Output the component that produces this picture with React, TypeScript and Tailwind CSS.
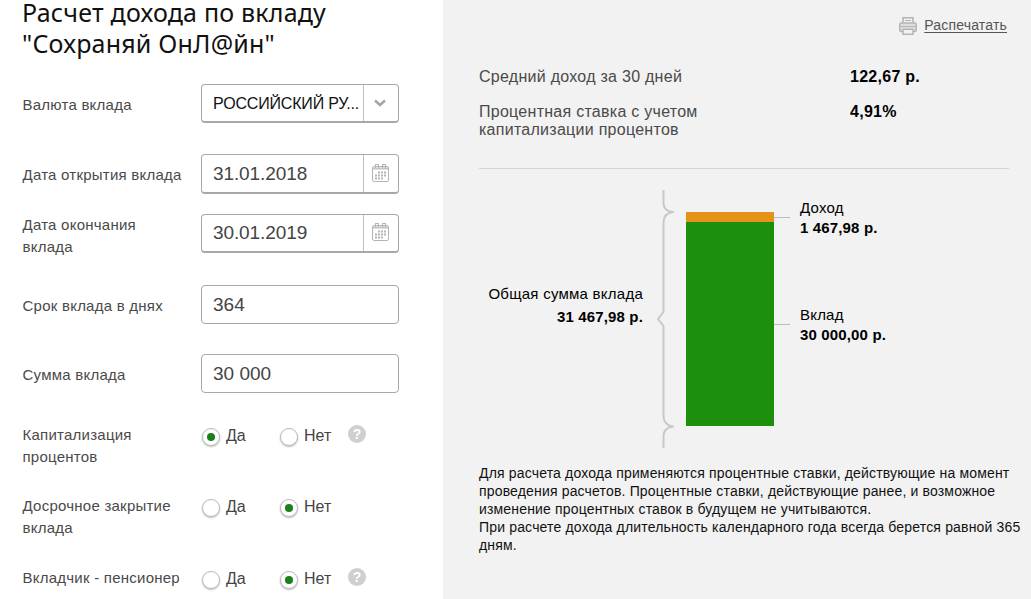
import { ReactNode, useState } from "react";
import clsx from "clsx";

const Brace = () => (
  <svg
    className="mt-[21px] h-[258px] w-[20px] shrink-0"
    viewBox="0 0 20 258"
    fill="none"
    stroke="#c8c8c8"
    strokeWidth="2"
    strokeLinejoin="round"
  >
    <path d="M8.5 0V13Q8.5 21 18 22Q8.5 23 8.5 33V122L3 129L8.5 136V226Q8.5 235 18 236.500Q8.5 238 8.500 246V258" />
  </svg>
);

const Calendar = () => (
  <svg
    className="mr-[2px] mb-[2px] h-[18px] w-[17px]"
    viewBox="0 0 17 18"
    fill="none"
    stroke="#b5b5b5"
  >
    <rect x="0.5" y="2.5" width="16" height="15" rx="1.500" />
    <path d="M1 4.500H16" strokeWidth="2" stroke="#c4c4c4" />
    <path d="M3.500 0V4M6.500 0V4M10.500 0V4M13.500 0V4M3.500 .5H6.500M10.500 .5H13.500" />
    <path
      d="M6 8.500H15M3 11.500H15M3 14.500H12"
      strokeWidth="2"
      strokeDasharray="2 1"
    />
  </svg>
);

const Printer = () => (
  <svg
    className="h-[18px] w-[18px]"
    viewBox="0 0 18 18"
    fill="#f2f2f2"
    stroke="#b4b4b4"
    strokeWidth="1.500"
  >
    <path d="M4 7V.8H14V7" />
    <path d="M6 3.500H12" strokeWidth="1" />
    <rect x="0.8" y="6" width="16.400" height="8.500" rx="1.500" fill="#dedede" />
    <path d="M1.500 9.500H16.500" strokeWidth="1" />
    <rect x="4" y="12.300" width="10" height="5" />
  </svg>
);

const Row = ({
  label,
  className,
  labelClassName,
  children,
}: {
  label: ReactNode;
  className: string;
  labelClassName?: string;
  children: ReactNode;
}) => (
  <div className={clsx("flex items-start", className)}>
    <div
      className={clsx(
        "w-[179px] shrink-0 pl-[0.5px] text-[15px] leading-[22px] tracking-[0.24px] text-[#4a4a4a]",
        labelClassName
      )}
    >
      {label}
    </div>
    {children}
  </div>
);

const Field = ({
  value,
  icon,
  className,
}: {
  value: string;
  icon?: ReactNode;
  className?: string;
}) => (
  <div
    className={clsx(
      "flex w-[198px] rounded-[4px] border border-[#a8a8a8] bg-white",
      className || "h-[39px] text-[19px] leading-[37px] text-[#444]"
    )}
  >
    <div className="flex-1 whitespace-nowrap pl-[11px]">{value}</div>
    {icon && (
      <div className="flex w-[35px] shrink-0 items-center justify-center border-l border-[#bdbdbd]">
        {icon}
      </div>
    )}
  </div>
);

const Radio = ({
  label,
  checked,
  onClick,
}: {
  label: string;
  checked: boolean;
  onClick: () => void;
}) => (
  <button
    type="button"
    className="flex w-[78px] items-start text-left"
    onClick={onClick}
  >
    <span className="mt-[4px] ml-px flex size-[18px] items-center justify-center rounded-full border border-[#bcbcbc] bg-white shadow-[0_1px_2px_#bbb]">
      {checked && <span className="size-2 rounded-full bg-[#188118]" />}
    </span>
    <span className="ml-[6px] text-[16px] leading-[24px] text-[#444]">
      {label}
    </span>
  </button>
);

const YesNo = ({ initial, hint }: { initial: boolean; hint?: boolean }) => {
  const [value, setValue] = useState(initial);

  return (
    <div className="flex">
      <Radio label="Да" checked={value} onClick={() => setValue(true)} />
      <Radio label="Нет" checked={!value} onClick={() => setValue(false)} />
      {hint && (
        <span className="mt-px -ml-[9px] flex size-[18px] items-center justify-center rounded-full bg-[#cfcfcf] text-[14px] font-bold text-white">
          ?
        </span>
      )}
    </div>
  );
};

const Form = () => (
  <div className="w-[443px] shrink-0 pl-[22px]">
    <h1 className="-mt-[3px] h-[87px] font-['Noto_Sans'] text-[25px] leading-[31px] tracking-[0.2px] text-[#111]">
      Расчет дохода по вкладу
      <br />
      "Сохраняй ОнЛ@йн"
    </h1>
    <Row label="Валюта вклада" className="h-[70px]" labelClassName="pt-[10px]">
      <Field
        value="РОССИЙСКИЙ РУ..."
        className="h-[39px] border-b-2 text-[16px] leading-[37px] tracking-[-0.18px] text-[#111]"
        icon={
          <svg
            className="mr-[3px] h-[8px] w-[12px]"
            viewBox="0 0 12 8"
            fill="none"
          >
            <path d="M1 1.500L6 6L11 1.500" stroke="#a6a6a6" strokeWidth="2.500" />
          </svg>
        }
      />
    </Row>
    <Row
      label="Дата открытия вклада"
      className="h-[60px]"
      labelClassName="pt-[10px]"
    >
      <Field
        value="31.01.2018"
        className="h-[40px] border-b-2 text-[19px] leading-[37px] tracking-[-0.1px] text-[#444]"
        icon={<Calendar />}
      />
    </Row>
    <Row
      label={
        <>
          Дата окончания
          <br />
          вклада
        </>
      }
      className="h-[71px]"
    >
      <Field
        value="30.01.2019"
        className="h-[39px] border-b-2 text-[19px] leading-[35px] tracking-[-0.1px] text-[#444]"
        icon={<Calendar />}
      />
    </Row>
    <Row
      label="Срок вклада в днях"
      className="h-[69px]"
      labelClassName="pt-[10px]"
    >
      <Field value="364" />
    </Row>
    <Row label="Сумма вклада" className="h-[70px]" labelClassName="pt-[10px]">
      <Field value="30 000" />
    </Row>
    <Row
      label={
        <>
          Капитализация
          <br />
          процентов
        </>
      }
      className="h-[71px]"
    >
      <YesNo initial={true} hint />
    </Row>
    <Row
      label={
        <>
          Досрочное закрытие
          <br />
          вклада
        </>
      }
      className="h-[72px]"
    >
      <YesNo initial={false} />
    </Row>
    <Row label="Вкладчик - пенсионер" className="h-[32px]">
      <YesNo initial={false} hint />
    </Row>
  </div>
);

const Legend = ({ label, value }: { label: string; value: string }) => (
  <div className="flex">
    <span className="mt-[19px] h-px w-[16px] bg-[#bdbdbd]" />
    <div className="ml-[10px] whitespace-nowrap text-[15px] leading-[20px]">
      <div className="tracking-[0.2px]">{label}</div>
      <div className="font-bold tracking-[0.15px]">{value}</div>
    </div>
  </div>
);

const Chart = () => (
  <div className="flex h-[295px]">
    <div className="w-[164px] shrink-0 pt-[113px] text-right text-[15px] leading-[23px]">
      <div className="tracking-[0.25px]">Общая сумма вклада</div>
      <div className="font-bold tracking-[0.15px]">31 467,98 р.</div>
    </div>
    <div className="ml-[12px]">
      <Brace />
    </div>
    <div className="mt-[43px] ml-[11px] w-[88px] shrink-0">
      <div className="h-[10px] bg-[#e69119]" />
      <div className="h-[204px] bg-[#1c900c]" />
    </div>
    <div className="pt-[29px]">
      <Legend label="Доход" value="1 467,98 р." />
      <div className="h-[67px]" />
      <Legend label="Вклад" value="30 000,00 р." />
    </div>
  </div>
);

const Result = () => (
  <div className="flex-1 bg-[#f2f2f2] pl-[36px]">
    <div className="flex h-[68px] items-start justify-end pt-[17px] pr-[24px]">
      <Printer />
      <a
        href="#"
        className="ml-[7px] text-[14px] leading-[17px] tracking-[0.18px] text-[#555] underline underline-offset-2"
      >
        Распечатать
      </a>
    </div>
    <div className="mr-[22px] h-[101px] border-b border-[#d6d6d6] text-[16px] leading-[18px] tracking-[0.27px] text-[#4a4a4a]">
      <div className="flex h-[35px]">
        <div className="w-[371px]">Средний доход за 30 дней</div>
        <div className="font-bold text-black">122,67 р.</div>
      </div>
      <div className="flex">
        <div className="w-[371px]">
          Процентная ставка с учетом
          <br />
          капитализации процентов
        </div>
        <div className="font-bold text-black">4,91%</div>
      </div>
    </div>
    <Chart />
    <p className="whitespace-nowrap text-[14px] leading-[18px] tracking-[0.165px] text-[#111]">
      Для расчета дохода применяются процентные ставки, действующие на момент
      <br />
      проведения расчетов. Процентные ставки, действующие ранее, и возможное
      <br />
      изменение процентных ставок в будущем не учитываются.
      <br />
      При расчете дохода длительность календарного года всегда берется равной
      365
      <br />
      дням.
    </p>
  </div>
);

const App = () => (
  <div className="flex h-[599px] w-[1031px] overflow-hidden bg-white font-['Liberation_Sans',sans-serif] text-black">
    <Form />
    <Result />
  </div>
);

export default App;
